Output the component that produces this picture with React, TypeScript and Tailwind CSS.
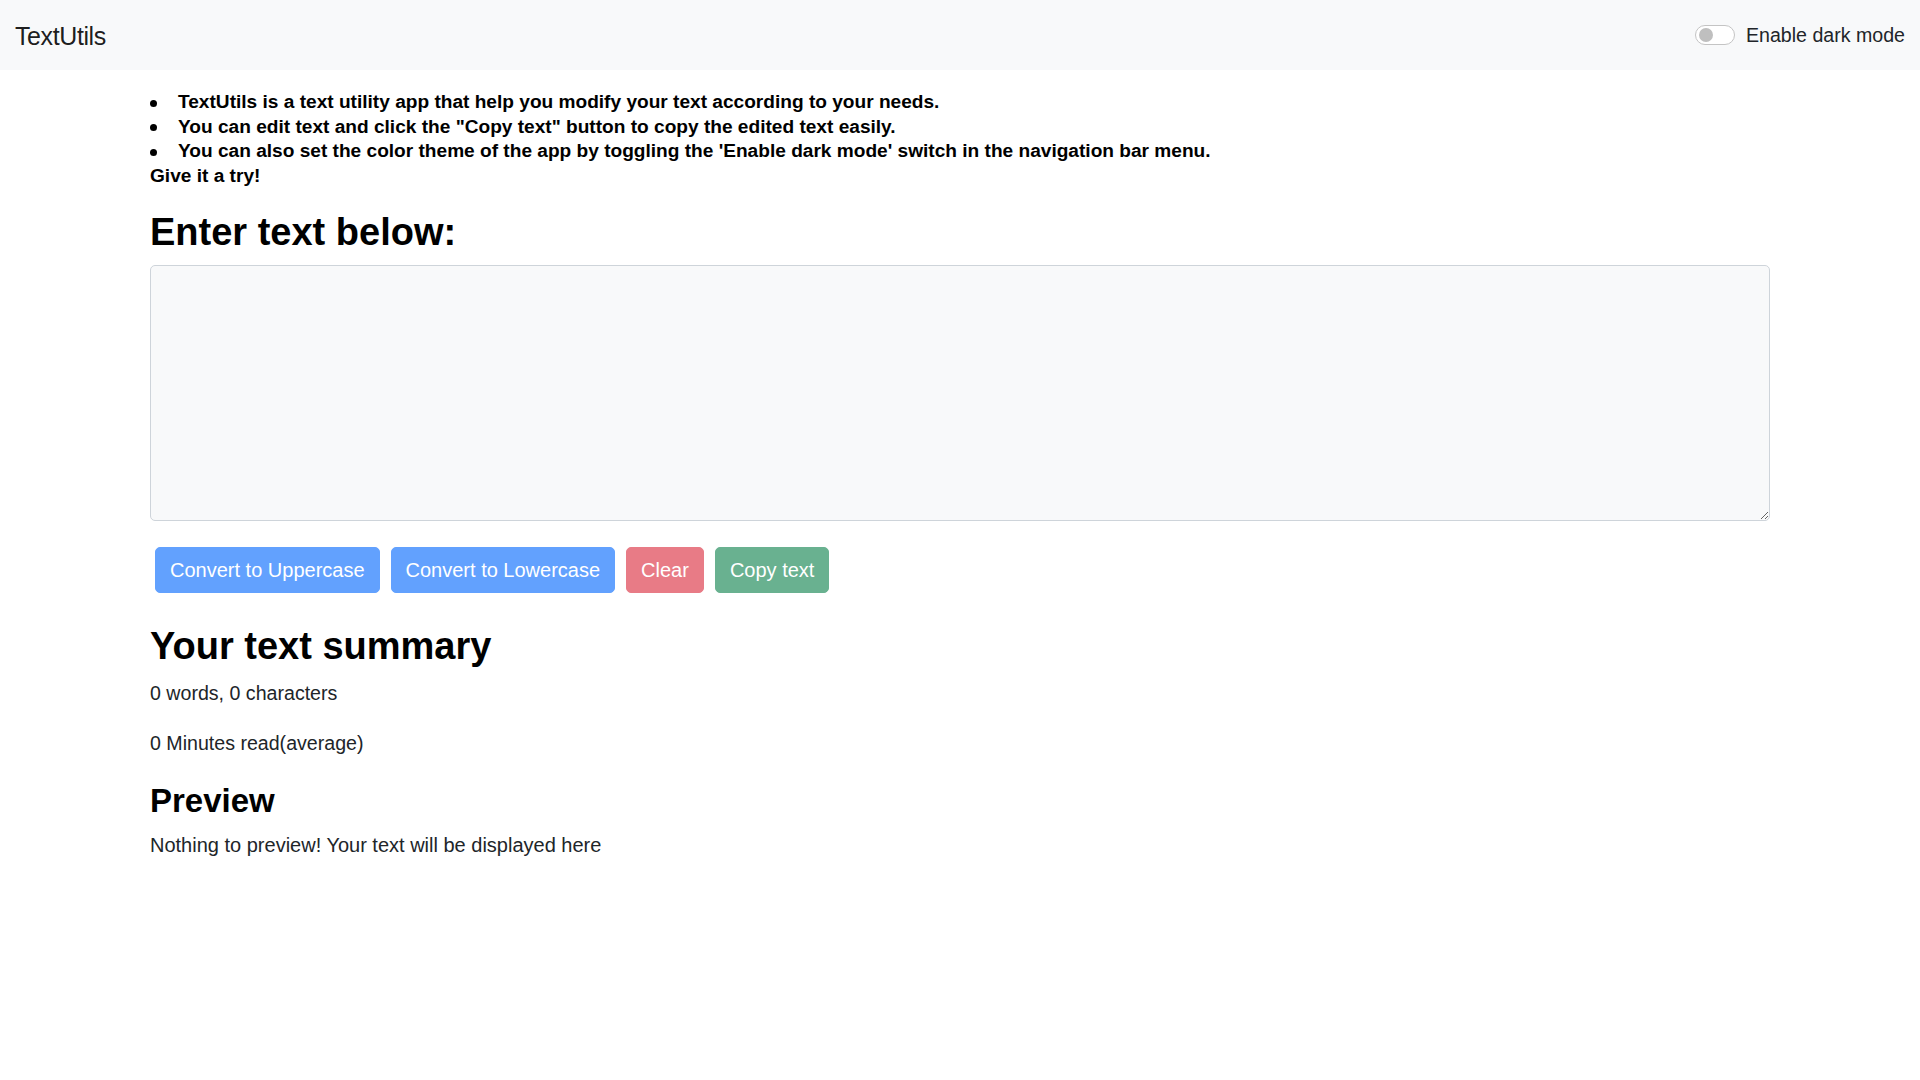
import React, { useState } from "react";

export default function App() {
  const [text, setText] = useState("");
  const [dark, setDark] = useState(false);
  const words = text.split(/\s+/).filter((w) => w.length > 0).length;

  const bullets = [
    "TextUtils is a text utility app that help you modify your text according to your needs.",
    'You can edit text and click the "Copy text" button to copy the edited text easily.',
    "You can also set the color theme of the app by toggling the 'Enable dark mode' switch in the navigation bar menu.",
  ];

  return (
    <div className="min-h-[1080px] bg-white font-['Liberation_Sans',Arial,sans-serif] text-[#212529]">
      <nav className="flex h-[70px] items-center justify-between bg-[#f8f9fa] pl-[15px] pr-[15px]">
        <span className="mt-[2px] text-[25px] leading-[30px] tracking-[-0.4px] text-[rgba(0,0,0,0.9)]">
          TextUtils
        </span>
        <label className="flex cursor-pointer items-center">
          <button
            type="button"
            onClick={() => setDark(!dark)}
            className="flex h-[20px] w-[40px] items-center rounded-full border border-[#c4c4c4] bg-white pl-[3px]"
          >
            <span className="block h-[14px] w-[14px] rounded-full bg-[#bfbfbf]" />
          </button>
          <span className="ml-[11px] text-[19.6px] leading-[30px] text-[#212529]">Enable dark mode</span>
        </label>
      </nav>

      <div className="mx-auto w-[1620px] pt-[20px]">
        <ul className="text-[19.1px] font-bold leading-[24.5px] text-black">
          {bullets.map((b) => (
            <li key={b} className="flex items-center">
              <span className="mr-[21px] mt-[2px] block h-[7px] w-[7px] shrink-0 rounded-full bg-black" />
              <span>{b}</span>
            </li>
          ))}
        </ul>
        <div className="text-[19.1px] font-bold leading-[24.5px] text-black">Give it a try!</div>

        <h1 className="mt-[22px] text-[38px] font-bold leading-[1.2] text-black">Enter text below:</h1>
        <textarea
          value={text}
          onChange={(e) => setText(e.target.value)}
          className="mt-[9px] block h-[256px] w-full rounded-[5px] border border-[#ced4da] bg-[#f8f9fa] px-[15px] py-[8px] text-[20px] leading-[30px] outline-none"
        />

        <div className="ml-[5px] mt-[26.5px] flex gap-[11px]">
          <button className="h-[46px] rounded-[5px] border border-[#62a1fe] bg-[#62a1fe] px-[14px] text-[20px] text-white">
            Convert to Uppercase
          </button>
          <button className="h-[46px] rounded-[5px] border border-[#62a1fe] bg-[#62a1fe] px-[14px] text-[20px] text-white">
            Convert to Lowercase
          </button>
          <button className="h-[46px] rounded-[5px] border border-[#e87b86] bg-[#e87b86] px-[14px] text-[20px] text-white">
            Clear
          </button>
          <button className="h-[46px] rounded-[5px] border border-[#69b190] bg-[#69b190] px-[14px] text-[20px] text-white">
            Copy text
          </button>
        </div>

        <h2 className="mt-[31px] text-[38px] font-bold leading-[1.2] text-black">Your text summary</h2>
        <p className="mt-[8px] text-[19.6px] leading-[30px]">
          {words} words, {text.length} characters
        </p>
        <p className="mt-[20px] text-[19.6px] leading-[30px]">{0.008 * words} Minutes read(average)</p>

        <h3 className="mt-[23px] text-[33px] font-bold leading-[1.2] text-black">Preview</h3>
        <p className="mt-[10px] text-[20px] leading-[30px]">
          {text.length > 0 ? text : "Nothing to preview! Your text will be displayed here"}
        </p>
      </div>
    </div>
  );
}
